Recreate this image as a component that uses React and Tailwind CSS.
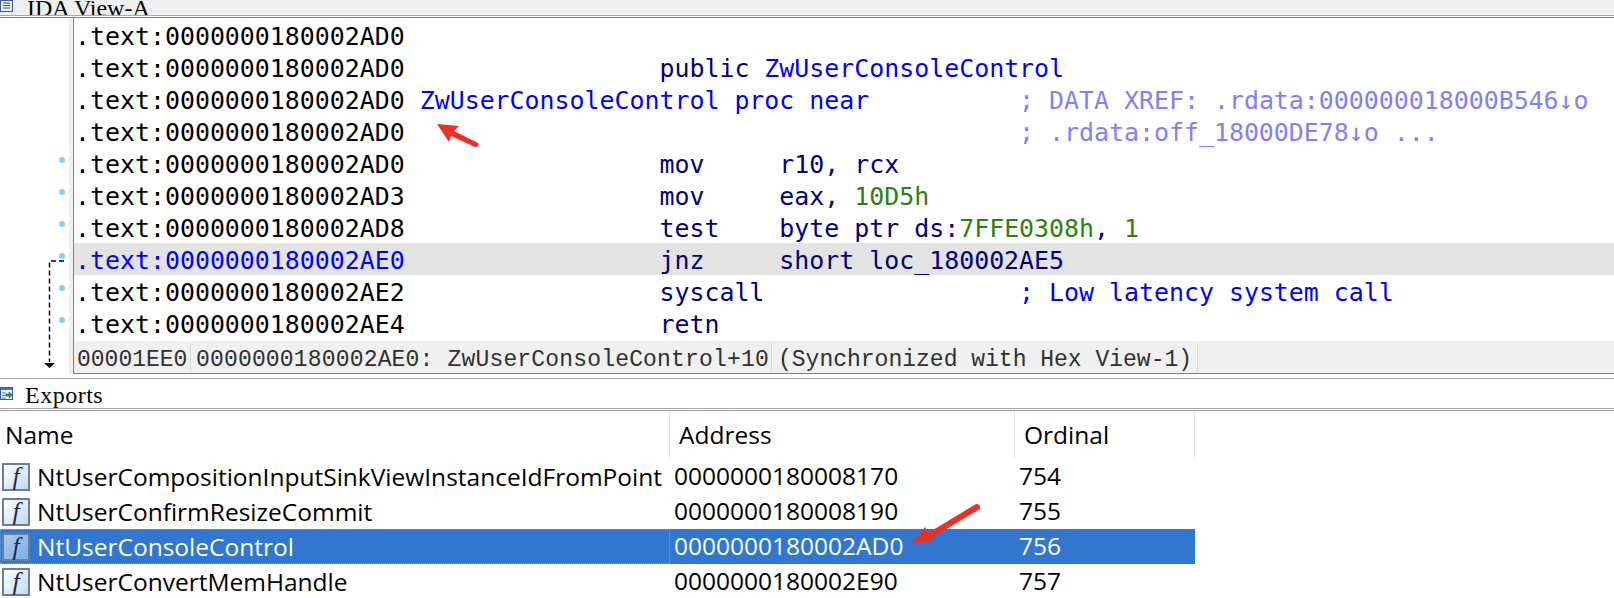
import React from 'react';

// code listing, one entry per row; columns are padded with spaces as in the IDA view
const navy = 'text-[#000080]';
const blue = 'text-[#0000ff]';
const green = 'text-[#2e8010]';
const faint = 'text-[#8080ff]';

const rows = [
  { dot: false, addr: '0000000180002AD0', parts: [] },
  { dot: false, addr: '0000000180002AD0', parts: [['                 public ', navy], ['ZwUserConsoleControl', blue]] },
  { dot: false, addr: '0000000180002AD0', parts: [[' ZwUserConsoleControl proc near', blue], ['          ; DATA XREF: .rdata:000000018000B546↓o', faint]] },
  { dot: false, addr: '0000000180002AD0', parts: [['                                         ; .rdata:off_18000DE78↓o ...', faint]] },
  { dot: true, addr: '0000000180002AD0', parts: [['                 mov     r10, rcx', navy]] },
  { dot: true, addr: '0000000180002AD3', parts: [['                 mov     eax, ', navy], ['10D5h', green]] },
  { dot: true, addr: '0000000180002AD8', parts: [['                 test    byte ptr ds:', navy], ['7FFE0308h', green], [', ', navy], ['1', green]] },
  { dot: true, addr: '0000000180002AE0', active: true, parts: [['                 jnz     short loc_180002AE5', navy]] },
  { dot: true, addr: '0000000180002AE2', parts: [['                 syscall', navy], ['                 ; Low latency system call', blue]] },
  { dot: true, addr: '0000000180002AE4', parts: [['                 retn', navy]] },
];

const exportsList = [
  { name: 'NtUserCompositionInputSinkViewInstanceIdFromPoint', addr: '0000000180008170', ord: '754' },
  { name: 'NtUserConfirmResizeCommit', addr: '0000000180008190', ord: '755' },
  { name: 'NtUserConsoleControl', addr: '0000000180002AD0', ord: '756', selected: true },
  { name: 'NtUserConvertMemHandle', addr: '0000000180002E90', ord: '757' },
];

const FuncIcon = ({ selected }) => (
  <div className={`ml-[2px] mr-[7px] flex h-[28px] w-[28px] shrink-0 items-center justify-center border-2 border-[#6f7f8f] bg-gradient-to-br ${selected ? 'from-[#a9c8ee] to-[#7fb0e6]' : 'from-white to-[#c4d8f4]'}`}>
    <span className="font-['Liberation_Serif'] text-[26px] leading-none italic text-[#1c2a4a]">f</span>
  </div>
);

const DocIcon = () => (
  <svg width="14" height="13" viewBox="0 0 14 13" className="shrink-0">
    <rect x="0.5" y="0.5" width="12" height="11" fill="#e8f0fa" stroke="#3a5a8c" />
    <path d="M3 3h7M3 5.5h7M3 8h7" stroke="#3a5a8c" strokeWidth="1" />
  </svg>
);

const ExportIcon = () => (
  <svg width="14" height="14" viewBox="0 0 14 14" className="shrink-0">
    <rect x="0.5" y="0.5" width="12" height="12" fill="#e8f0fa" stroke="#2f5f9f" />
    <rect x="1" y="1" width="11" height="2" fill="#3a78c8" />
    <path d="M2 6h4M2 8.500h4M2 11h4" stroke="#5a7fae" strokeWidth="1" />
    <path d="M6 7h3V5l3.500 3L9 11V9H6z" fill="#2f9a3a" stroke="#14561e" strokeWidth="0.5" />
  </svg>
);

const App = () => {
  return (
    <div className="relative h-[598px] w-[1614px] overflow-hidden bg-white">
      {/* IDA View tab */}
      <div className="flex h-[15px] items-end gap-[13px] overflow-hidden bg-[#f0f0f0] font-['Liberation_Serif',serif] text-[24px] leading-[24px] text-black">
        <div className="mb-[2px]"><DocIcon /></div>
        <span className="mb-[-5px] whitespace-pre">IDA View-A</span>
      </div>
      <div className="h-[3px] border-t border-b border-t-[#a8a8a8] border-b-[#808080] bg-white" />

      <div className="flex h-[356px]">
        {/* gutter with the dots and the jump arrow */}
        <div className="relative w-[73px] shrink-0 border-r-4 border-[#f0f0f0] pt-[2px]">
          {rows.map((row, i) => (
            <div key={i} className="flex h-[32px] items-center justify-end pr-[4px]">
              {row.dot && <div className="mb-[9px] h-[6px] w-[6px] rounded-full bg-[#80d0ff]" />}
            </div>
          ))}
          <svg width="69" height="130" viewBox="0 0 69 130" className="absolute top-[222px] left-0">
            <path d="M64 21H49.500V122" fill="none" stroke="#000" strokeWidth="1.500" strokeDasharray="5 3" />
            <path d="M44 123h11l-5.500 5z" fill="#000" />
          </svg>
        </div>

        <div className="flex min-w-0 flex-1 flex-col border-b border-l border-[#808080]">
          <div className="flex-1 pt-[1px] font-['DejaVu_Sans_Mono',monospace] text-[24.9px] leading-[36px]">
            {rows.map((row, i) => (
              <div key={i} className={`h-[32px] pl-[1px] whitespace-pre ${row.active ? 'bg-[#e3e3e3]' : ''}`}>
                <span className={row.active ? 'text-[#0000ff]' : 'text-black'}>.text:{row.addr}</span>
                {row.parts.map(([text, color], j) => (
                  <span key={j} className={color}>{text}</span>
                ))}
              </div>
            ))}
          </div>
          {/* status line */}
          <div className="flex h-[32px] items-center bg-[#f0f0f0] font-['Liberation_Mono',monospace] text-[23px] whitespace-pre text-[#303030]">
            <div className="w-[116px] pt-[6px] pl-[3px]">00001EE0</div>
            <div className="h-[28px] border-l border-[#d8d8d8]" />
            <div className="w-[580px] pt-[6px] pl-[5px] tracking-[0.17px]">0000000180002AE0: ZwUserConsoleControl+10</div>
            <div className="h-[28px] border-l border-[#d8d8d8]" />
            <div className="w-[425px] pt-[6px] pl-[6px]">(Synchronized with Hex View-1)</div>
            <div className="h-[28px] border-l border-[#d8d8d8]" />
          </div>
        </div>
      </div>

      {/* Exports tab */}
      <div className="mt-[4px] flex h-[30px] items-center gap-[11px] border-t border-[#a8a8a8] font-['Liberation_Serif',serif] text-[24px] text-black">
        <ExportIcon />
        <span className="mt-[3px] tracking-[0.5px]">Exports</span>
      </div>
      <div className="h-[3px] border-t border-b border-t-[#a8a8a8] border-b-[#a0a0a0] bg-white" />

      <div className="font-['Open_Sans',sans-serif] text-[24.5px] leading-[34px] text-black">
        <div className="grid h-[48px] grid-cols-[670px_345px_180px] items-center">
          <div className="h-full border-r border-[#e5e5e5] pl-[5px] leading-[47px]">Name</div>
          <div className="h-full border-r border-[#e5e5e5] pl-[9px] leading-[47px]">Address</div>
          <div className="h-full border-r border-[#e5e5e5] pl-[9px] leading-[47px]">Ordinal</div>
        </div>
        {exportsList.map((item) => (
          <div key={item.name} className={`grid h-[35px] w-[1195px] grid-cols-[670px_345px_180px] ${item.selected ? 'bg-[#3177d0] text-white' : ''}`}>
            <div className={`flex items-center whitespace-nowrap ${item.selected ? 'outline-1 -outline-offset-1 outline-dotted outline-[#e0883a]' : ''}`}>
              <FuncIcon selected={item.selected} />
              <span>{item.name}</span>
            </div>
            <div className="pl-[4px]">{item.addr}</div>
            <div className="pl-[4px]">{item.ord}</div>
          </div>
        ))}
      </div>

      {/* red annotation arrows */}
      <svg width="1614" height="598" viewBox="0 0 1614 598" className="pointer-events-none absolute top-0 left-0">
        <path d="M437 124L459 126L454 131L478 143Q480 147 475 147L451 136L449 142Z" fill="#ee2f24" />
        <path d="M912 543L925 527L928 533L976 504Q981 504 980 509L931 538L933 542Z" fill="#ee2f24" />
      </svg>
    </div>
  );
};

export default App;
